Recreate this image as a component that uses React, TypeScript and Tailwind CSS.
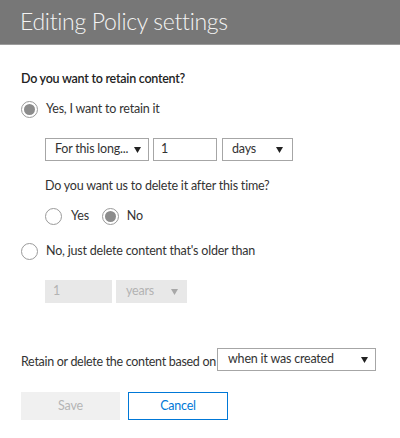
import React, { useState } from 'react';

const font = { fontFamily: 'Lato, "Open Sans", sans-serif' };

function Arrow({ muted }: { muted?: boolean }) {
    return (
        <svg width="7" height="6" viewBox="0 0 7 6" className="shrink-0">
            <path d="M0 0 H7 L3.5 6 Z" fill={muted ? '#a8a8a8' : '#222'} />
        </svg>
    );
}

function Radio({ checked, onClick }: { checked?: boolean; onClick?: () => void }) {
    return (
        <span
            onClick={onClick}
            className="w-[17px] h-[17px] rounded-full border border-[#9a9a9a] flex items-center justify-center shrink-0 cursor-pointer bg-white"
        >
            {checked && <span className="w-[11px] h-[11px] rounded-full bg-[#8c8c8c]" />}
        </span>
    );
}

export default function App() {
    const [retain, setRetain] = useState(true);
    const [del, setDel] = useState(false);

    return (
        <div className="w-[400px] h-[438px] bg-white text-[12.5px] tracking-[-0.2px] text-[#333] whitespace-nowrap" style={font}>
            {/* Header */}
            <div className="h-[45px] bg-[#777777] border-b border-[#9c9c9c] flex items-center px-[20px]">
                <h1 className="text-[23px] font-light tracking-[-0.3px] text-[#f4f4f4] leading-none pb-[2px]">Editing Policy settings</h1>
            </div>

            <div className="px-[21px]">
                <p className="mt-[25px] leading-[18px] font-semibold tracking-[-0.25px] text-[#222]">Do you want to retain content?</p>

                {/* Yes option */}
                <div className="mt-[12px] flex items-center gap-[8px] h-[18px]">
                    <Radio checked={retain} onClick={() => setRetain(true)} />
                    <span>Yes, I want to retain it</span>
                </div>

                <div className="pl-[24px]">
                    <div className="mt-[20px] flex items-center h-[23px]">
                        <div className="w-[104px] h-[23px] border border-[#a6a6a6] flex items-center justify-between pl-[9px] pr-[7px]">
                            <span>For this long...</span>
                            <Arrow />
                        </div>
                        <div className="ml-[4px] w-[64px] h-[23px] border border-[#a6a6a6] flex items-center pl-[7px]">1</div>
                        <div className="ml-[5px] w-[71px] h-[23px] border border-[#a6a6a6] flex items-center justify-between pl-[9px] pr-[9px]">
                            <span>days</span>
                            <Arrow />
                        </div>
                    </div>

                    <p className="mt-[16px] leading-[18px]">Do you want us to delete it after this time?</p>

                    <div className="mt-[12px] flex items-center h-[18px]">
                        <Radio checked={del} onClick={() => setDel(true)} />
                        <span className="ml-[9px]">Yes</span>
                        <span className="ml-[13px]">
                            <Radio checked={!del} onClick={() => setDel(false)} />
                        </span>
                        <span className="ml-[8px]">No</span>
                    </div>
                </div>

                {/* No option */}
                <div className="mt-[17px] flex items-center gap-[8px] h-[18px]">
                    <Radio checked={!retain} onClick={() => setRetain(false)} />
                    <span>No, just delete content that's older than</span>
                </div>

                <div className="pl-[24px] mt-[20px] flex items-center h-[23px] text-[#b3b3b3]">
                    <div className="w-[67px] h-[23px] bg-[#e8e8e8] flex items-center pl-[8px]">1</div>
                    <div className="ml-[4px] w-[71px] h-[23px] bg-[#e8e8e8] flex items-center justify-between pl-[10px] pr-[9px]">
                        <span>years</span>
                        <Arrow muted />
                    </div>
                </div>

                {/* Based on */}
                <div className="mt-[45px] flex items-center h-[23px]">
                    <span className="pt-[6px] tracking-[-0.3px]">Retain or delete the content based on</span>
                    <div className="ml-auto mr-[3px] w-[159px] h-[23px] border border-[#a6a6a6] flex items-center justify-between pl-[10px] pr-[7px]">
                        <span>when it was created</span>
                        <Arrow />
                    </div>
                </div>

                {/* Buttons */}
                <div className="mt-[21px] flex gap-[8px]">
                    <button className="w-[99px] h-[28px] bg-[#f0f0f0] text-[#b5b5b5]">Save</button>
                    <button className="w-[100px] h-[28px] border border-[#0078d7] text-[#0078d7] bg-white">Cancel</button>
                </div>
            </div>
        </div>
    );
}
